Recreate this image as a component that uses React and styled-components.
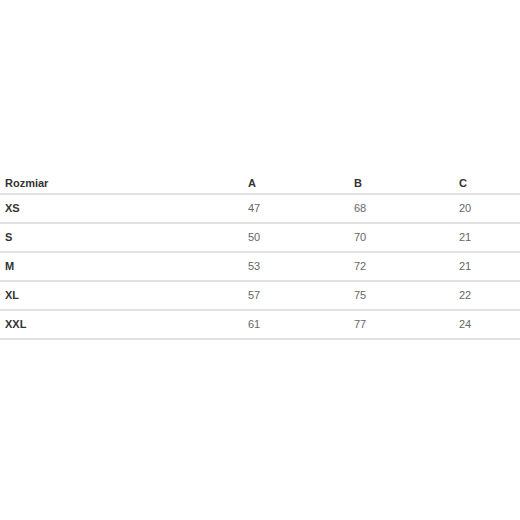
import React from 'react';
import styled, { createGlobalStyle } from 'styled-components';

const GlobalStyle = createGlobalStyle`
    html, body{
        margin: 0;
        padding: 0;
        background: #fff;
        width: 520px;
        height: 520px;
    }
`;

const rows = [
    ['XS', 47, 68, 20],
    ['S', 50, 70, 21],
    ['M', 53, 72, 21],
    ['XL', 57, 75, 22],
    ['XXL', 61, 77, 24],
];

const App = () => {
    return (
        <>
            <GlobalStyle />
            <Page>
                <Table>
                    <thead>
                        <tr>
                            <Head>Rozmiar</Head>
                            <Head>A</Head>
                            <Head>B</Head>
                            <Head>C</Head>
                        </tr>
                    </thead>
                    <tbody>
                        {rows.map(([size, a, b, c]) => (
                            <tr key={size}>
                                <Size>{size}</Size>
                                <Cell>{a}</Cell>
                                <Cell>{b}</Cell>
                                <Cell>{c}</Cell>
                            </tr>
                        ))}
                    </tbody>
                </Table>
            </Page>
        </>
    );
};

const Page = styled.div`
    width: 520px;
    height: 520px;
    display: flex;
    flex-direction: column;
    padding-top: 170px;
    box-sizing: border-box;
    font-family: Arial, "Liberation Sans", sans-serif;
    font-size: 11px;
`;
const Table = styled.table`
    width: 520px;
    border-collapse: collapse;
    table-layout: fixed;
    th:nth-child(1), td:nth-child(1){ width: 233px; }
    th:nth-child(2), td:nth-child(2){ width: 96px; }
    th:nth-child(3), td:nth-child(3){ width: 95px; }
`;
const Head = styled.th`
    text-align: left;
    font-weight: bold;
    color: #333;
    height: 20px;
    padding: 3px 5px 0;
    vertical-align: middle;
    border-bottom: 2px solid #e2e2e2;
`;
const Cell = styled.td`
    color: #666;
    height: 25px;
    padding: 0 5px 2px;
    vertical-align: middle;
    border-bottom: 2px solid #e2e2e2;
`;
const Size = styled(Cell)`
    color: #333;
    font-weight: bold;
`;

export default App;
